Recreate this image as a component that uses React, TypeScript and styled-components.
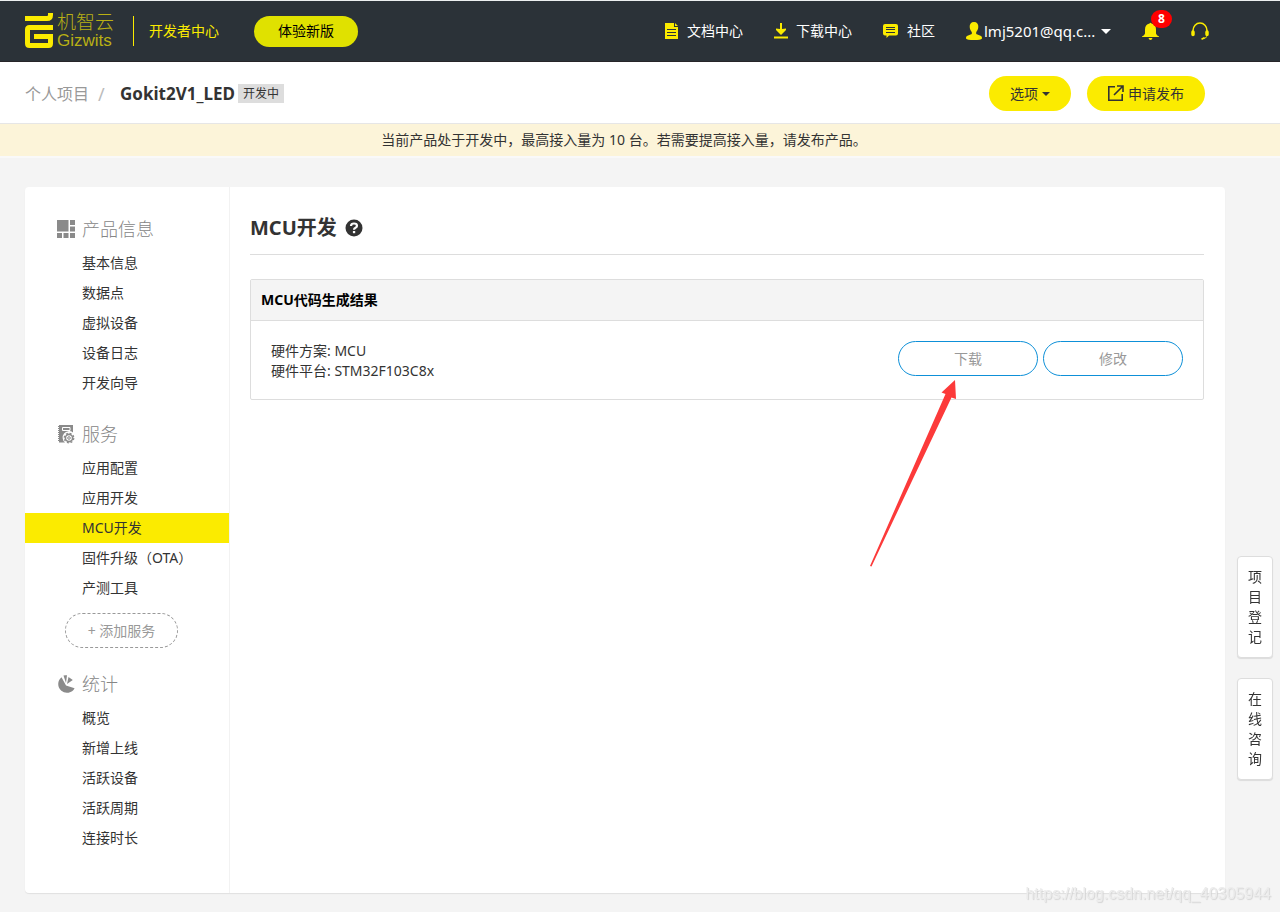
import React from 'react';
import styled, { createGlobalStyle, css } from 'styled-components';

const yellow = '#fbeb00';
const sans = `'Noto Sans', 'Noto Sans CJK SC', sans-serif`;

const GlobalStyle = createGlobalStyle`
  *, *::before, *::after { box-sizing: border-box; }
  body {
    margin: 0;
    background: #f4f4f4;
    color: #333;
    font: 14px/20px ${sans};
  }
  a { color: inherit; text-decoration: none; }
  button { font: inherit; color: inherit; cursor: pointer; padding: 0; }
  ul, h1, h2, h3, p { margin: 0; padding: 0; list-style: none; }
  svg { display: block; flex: none; }
`;

const Header = styled.header`
  display: flex;
  align-items: center;
  justify-content: space-between;
  height: 62px;
  padding: 0 71px 0 25px;
  background: #2b3238;
  border-top: 1px solid #eceff0;
  border-bottom: 1px solid #272529;
`;

const HeaderLeft = styled.div`
  display: flex;
  align-items: center;
`;

const Brand = styled.a`
  display: flex;
  align-items: center;
  gap: 4px;
  padding-right: 19px;
  border-right: 1px solid ${yellow};
  height: 30px;
`;

const BrandName = styled.span`
  display: flex;
  flex-direction: column;
  color: #b9b014;
  font-family: 'Liberation Sans', 'Noto Sans CJK SC', sans-serif;
`;

const BrandCn = styled.span`
  font-size: 19px;
  line-height: 20px;
  font-weight: 300;
`;

const BrandEn = styled.span`
  font-size: 17px;
  line-height: 16px;
`;

const CenterLink = styled.a`
  margin-left: 15px;
  color: ${yellow};
`;

const TrialButton = styled.button`
  width: 104px;
  height: 31px;
  margin-left: 35px;
  border: 0;
  border-radius: 16px;
  background: #e0e100;
  color: #000;
`;

const Nav = styled.nav`
  display: flex;
  align-items: center;
  gap: 31px;
  color: #fff;
`;

const NavLink = styled.a`
  display: flex;
  align-items: center;
  gap: 8px;
`;

const UserButton = styled.button`
  display: flex;
  align-items: center;
  gap: 2px;
  border: 0;
  background: none;
  color: #fff;
`;

const UserName = styled.span`
  width: 115px;
  font-size: 15px;
  text-align: left;
  white-space: nowrap;
`;

const Caret = styled.span<{ $size: number }>`
  display: inline-block;
  border: ${p => p.$size}px solid transparent;
  border-top-color: currentColor;
  border-bottom: 0;
`;

const BellButton = styled.button`
  position: relative;
  width: 18px;
  border: 0;
  background: none;
`;

const Badge = styled.span`
  position: absolute;
  left: 9px;
  top: -12px;
  width: 21px;
  height: 18px;
  border-radius: 9px;
  background: #f00;
  color: #fff;
  font-size: 12px;
  line-height: 18px;
  font-weight: 700;
  text-align: center;
`;

const ProjectBar = styled.div`
  display: flex;
  align-items: center;
  justify-content: space-between;
  height: 62px;
  padding: 2px 75px 0 25px;
  background: #fff;
  border-bottom: 1px solid #e6e6e6;
`;

const Crumbs = styled.div`
  display: flex;
  align-items: center;
  font-size: 16px;
`;

const CrumbLink = styled.a`
  color: #999;
`;

const Slash = styled.span`
  width: 31px;
  padding-left: 9px;
  color: #bbb;
  font-size: 18px;
`;

const ProjectName = styled.h1`
  font-size: 17px;
  line-height: 20px;
  font-weight: 700;
`;

const Tag = styled.span`
  margin-left: 3px;
  padding: 0 5px;
  background: #ddd;
  font-size: 12px;
  line-height: 19px;
`;

const BarActions = styled.div`
  display: flex;
  gap: 16px;
`;

const YellowButton = styled.button`
  display: flex;
  align-items: center;
  gap: 4px;
  height: 35px;
  padding: 0 21px;
  border: 0;
  border-radius: 18px;
  background: ${yellow};
`;

const Notice = styled.p`
  height: 34px;
  padding: 0 32px 0 0;
  background: #fcf4d9;
  border-bottom: 2px solid #f9f9f9;
  line-height: 32px;
  text-align: center;
`;

const Panel = styled.div`
  display: flex;
  margin: 29px 55px 18px 25px;
  background: #fff;
  border-radius: 4px;
  box-shadow: 0 1px 1px rgba(0, 0, 0, 0.08);
`;

const Sidebar = styled.aside`
  flex: 0 0 205px;
  padding: 23px 0 40px;
  border-right: 1px solid #f2f2f2;
`;

const Section = styled.section`
  & + & { margin-top: 17px; }
`;

const SectionTitle = styled.h2`
  display: flex;
  align-items: center;
  gap: 7px;
  height: 38px;
  padding-left: 32px;
  color: #868686;
  font-size: 18px;
  font-weight: 300;
`;

const MenuLink = styled.a<{ $active?: boolean }>`
  display: block;
  padding-left: 57px;
  line-height: 30px;
  ${p => p.$active && css`background: ${yellow};`}
`;

const AddButton = styled.button`
  width: 113px;
  height: 35px;
  margin: 10px 0 0 40px;
  border: 1px dashed #999;
  border-radius: 18px;
  background: #fff;
  color: #999;
`;

const Main = styled.main`
  flex: 1;
  padding: 20px 21px 20px 20px;
`;

const PageTitle = styled.h2`
  display: flex;
  align-items: center;
  gap: 8px;
  height: 48px;
  padding-bottom: 6px;
  border-bottom: 1px solid #ddd;
  font-size: 20px;
  font-weight: 700;
`;

const Card = styled.section`
  margin-top: 24px;
  border: 1px solid #ddd;
  border-radius: 2px;
`;

const CardTitle = styled.h3`
  padding: 0 10px;
  background: #f4f4f4;
  border-bottom: 1px solid #ddd;
  color: #000;
  font-size: 14px;
  line-height: 40px;
`;

const CardBody = styled.div`
  display: flex;
  justify-content: space-between;
  align-items: flex-start;
  padding: 20px 20px 18px;
`;

const CardActions = styled.div`
  position: relative;
  display: flex;
  gap: 5px;
`;

const OutlineButton = styled.button`
  width: 140px;
  height: 35px;
  border: 1px solid #0e90d8;
  border-radius: 18px;
  background: #fff;
  color: #999;
`;

const Arrow = styled.svg`
  position: absolute;
  left: -30px;
  top: 38px;
  pointer-events: none;
`;

const FloatTools = styled.div`
  position: fixed;
  right: 7px;
  bottom: 132px;
  display: flex;
  flex-direction: column;
  gap: 20px;
`;

const FloatButton = styled.button`
  width: 36px;
  padding: 10px;
  border: 1px solid #ddd;
  border-radius: 4px;
  background: #fff;
  box-shadow: 0 1px 1px rgba(0, 0, 0, 0.1);
  line-height: 20px;
`;

const Watermark = styled.span`
  position: fixed;
  right: 9px;
  bottom: 8px;
  color: #ececec;
  font-family: 'Liberation Sans', sans-serif;
  font-size: 16px;
  text-shadow: 1px 1px 1px #d4d4d4;
`;

const LogoMark = () => (
  <svg width="28" height="36" viewBox="0 0 28 36" fill="none" stroke={yellow}>
    <path d="M0 5.500H22Q25.500 5.500 25.500 2V0" strokeWidth="5" />
    <path d="M28 14.500H4.500Q2.500 14.500 2.500 16.500V30.500Q2.500 32.500 4.500 32.500H23.500Q25.500 32.500 25.500 30.500V23.500H9" strokeWidth="5" />
  </svg>
);

const DocIcon = () => (
  <svg width="14" height="16" viewBox="0 0 14 16">
    <path fill={yellow} d="M0 0H9V4H13V16H0ZM10 0L13 3H10Z" />
    <path stroke="#2b3238" d="M2 6.500H11M2 9.500H11M2 12.500H11" />
  </svg>
);

const DownloadIcon = () => (
  <svg width="14" height="16" viewBox="0 0 14 16" fill={yellow}>
    <path d="M6 0H8V6L12 5.500V7L7 12L2 7V5.500L6 6ZM0 13.500H14V15.500H0Z" />
  </svg>
);

const ChatIcon = () => (
  <svg width="16" height="14" viewBox="0 0 16 14">
    <path fill={yellow} d="M2 0H13Q15 0 15 2V9.500Q15 11.500 13 11.500H6L3.500 14V11.500H2Q0 11.500 0 9.500V2Q0 0 2 0Z" />
    <path stroke="#2b3238" d="M3 3.500H12M3 5.500H12M3 8.500H12" />
  </svg>
);

const UserIcon = () => (
  <svg width="16" height="18" viewBox="0 0 16 18" fill={yellow}>
    <path d="M8 0C11 0 12.500 2 12.300 5C12.200 7.500 11 9 10.200 10V12L14.500 13.800C16 14.500 16 15.500 16 16.500Q15 18 8 18Q1 18 0 16.500C0 15.500 0 14.500 1.500 13.800L5.800 12V10C5 9 3.800 7.500 3.700 5C3.500 2 5 0 8 0Z" />
  </svg>
);

const BellIcon = () => (
  <svg width="17" height="18" viewBox="0 0 17 18" fill={yellow}>
    <path d="M7.500 1.500Q8.500 0 9.500 1.500C12.500 2 14 4.500 14 7.500V11.500Q14.500 13.500 17 14.500V15H0V14.500Q2.500 13.500 3 11.500V7.500C3 4.500 4.500 2 7.500 1.500ZM6.500 16H10.500Q10 18 8.500 18Q7 18 6.500 16Z" />
  </svg>
);

const HeadsetIcon = () => (
  <svg width="18" height="18" viewBox="0 0 18 18" fill="none" stroke={yellow}>
    <path d="M2 10V8.500A7 7.500 0 0 1 16 8.500V10" strokeWidth="1.500" />
    <path d="M2 10V12.500M16 10V12.500" strokeWidth="3.500" strokeLinecap="round" />
    <path d="M16 14.500Q14.500 16.500 11.500 16.500" strokeWidth="1" />
    <path d="M10.500 17.200L13.500 15.800" strokeWidth="1.800" />
  </svg>
);

const PublishIcon = () => (
  <svg width="16" height="17" viewBox="0 0 16 17" fill="none" stroke="#333" strokeWidth="1.600">
    <path d="M7 1.800H0.800V15.200H14.200V9M9 1H15V7M15 1L6 10" />
  </svg>
);

const GridIcon = () => (
  <svg width="18" height="18" viewBox="0 0 18 18" fill="#8a8a8a">
    <path d="M0 0H11.500V11.500H0ZM13 0H18V5H13ZM13 6.500H18V11.500H13ZM0 13H5V18H0ZM6.500 13H11.500V18H6.500ZM13 13H18V18H13Z" />
  </svg>
);

const ServiceIcon = () => (
  <svg width="18" height="19" viewBox="0 0 18 19">
    <path fill="#8a8a8a" d="M2 0H16V7.500A5.500 5.500 0 0 0 8 17.500H2Z" />
    <path stroke="#8a8a8a" d="M1 1.500H2M1 3.500H2M1 5.500H2M1 7.500H2M1 9.500H2M1 11.500H2M1 13.500H2M1 15.500H2" />
    <path fill="none" stroke="#fff" d="M5.500 2.500H13V5.500H5.500Z" />
    <circle cx="12" cy="13" r="5.800" fill="#fff" />
    <circle cx="12" cy="13" r="3.600" fill="none" stroke="#8a8a8a" strokeWidth="1.600" />
    <circle cx="12" cy="13" r="4.800" fill="none" stroke="#8a8a8a" strokeWidth="1.200" strokeDasharray="2 1.770" />
    <circle cx="12" cy="13" r="1.300" fill="none" stroke="#8a8a8a" />
  </svg>
);

const PieIcon = () => (
  <svg width="18" height="19" viewBox="0 0 18 19" fill="#8a8a8a">
    <path d="M9 10.500L4.500 2.300A8.700 8.700 0 1 0 17.600 13.200ZM9 8L6.500 0.500Q8 0 10 0.300ZM10 9L11.500 2L15.800 5Z" />
  </svg>
);

const HelpIcon = () => (
  <svg width="18" height="18" viewBox="0 0 18 18">
    <circle cx="9" cy="9" r="8.500" fill="#333" />
    <path d="M6 7Q6 4.500 9 4.500Q12 4.500 12 6.800Q12 8 10.500 8.700Q9 9.300 9 10.800" fill="none" stroke="#fff" strokeWidth="2.200" />
    <path d="M7.900 12H10.200V14.200H7.900Z" fill="#fff" />
  </svg>
);

const navItems = [
  { label: '文档中心', Icon: DocIcon },
  { label: '下载中心', Icon: DownloadIcon },
  { label: '社区', Icon: ChatIcon },
];

const menu = [
  { title: '产品信息', Icon: GridIcon, items: ['基本信息', '数据点', '虚拟设备', '设备日志', '开发向导'] },
  { title: '服务', Icon: ServiceIcon, items: ['应用配置', '应用开发', 'MCU开发', '固件升级（OTA）', '产测工具'], addLabel: '+ 添加服务' },
  { title: '统计', Icon: PieIcon, items: ['概览', '新增上线', '活跃设备', '活跃周期', '连接时长'] },
];

export default function App() {
  return (
    <>
      <GlobalStyle />
      <Header>
        <HeaderLeft>
          <Brand href="#">
            <LogoMark />
            <BrandName>
              <BrandCn>机智云</BrandCn>
              <BrandEn>Gizwits</BrandEn>
            </BrandName>
          </Brand>
          <CenterLink href="#">开发者中心</CenterLink>
          <TrialButton>体验新版</TrialButton>
        </HeaderLeft>
        <Nav>
          {navItems.map(({ label, Icon }) => (
            <NavLink href="#" key={label}>
              <Icon />
              {label}
            </NavLink>
          ))}
          <UserButton>
            <UserIcon />
            <UserName>lmj5201@qq.c...</UserName>
            <Caret $size={5} />
          </UserButton>
          <BellButton aria-label="消息">
            <BellIcon />
            <Badge>8</Badge>
          </BellButton>
          <a href="#" aria-label="客服">
            <HeadsetIcon />
          </a>
        </Nav>
      </Header>
      <ProjectBar>
        <Crumbs>
          <CrumbLink href="#">个人项目</CrumbLink>
          <Slash>/</Slash>
          <ProjectName>Gokit2V1_LED</ProjectName>
          <Tag>开发中</Tag>
        </Crumbs>
        <BarActions>
          <YellowButton>
            选项
            <Caret $size={4} />
          </YellowButton>
          <YellowButton>
            <PublishIcon />
            申请发布
          </YellowButton>
        </BarActions>
      </ProjectBar>
      <Notice>当前产品处于开发中，最高接入量为 10 台。若需要提高接入量，请发布产品。</Notice>
      <Panel>
        <Sidebar>
          {menu.map(({ title, Icon, items, addLabel }) => (
            <Section key={title}>
              <SectionTitle>
                <Icon />
                {title}
              </SectionTitle>
              <ul>
                {items.map(item => (
                  <li key={item}>
                    <MenuLink href="#" $active={item === 'MCU开发'}>{item}</MenuLink>
                  </li>
                ))}
              </ul>
              {addLabel && <AddButton>{addLabel}</AddButton>}
            </Section>
          ))}
        </Sidebar>
        <Main>
          <PageTitle>
            MCU开发
            <HelpIcon />
          </PageTitle>
          <Card>
            <CardTitle>MCU代码生成结果</CardTitle>
            <CardBody>
              <div>
                <p>硬件方案: MCU</p>
                <p>硬件平台: STM32F103C8x</p>
              </div>
              <CardActions>
                <OutlineButton>下载</OutlineButton>
                <OutlineButton>修改</OutlineButton>
                <Arrow width="90" height="190" viewBox="0 0 90 190">
                  <path fill="#fc3a3a" d="M87 1L73.500 13.500L77.500 15L2 187L3.500 187.500L83.500 18.500L88 20Z" />
                </Arrow>
              </CardActions>
            </CardBody>
          </Card>
        </Main>
      </Panel>
      <FloatTools>
        <FloatButton>项目登记</FloatButton>
        <FloatButton>在线咨询</FloatButton>
      </FloatTools>
      <Watermark>https://blog.csdn.net/qq_40305944</Watermark>
    </>
  );
}
